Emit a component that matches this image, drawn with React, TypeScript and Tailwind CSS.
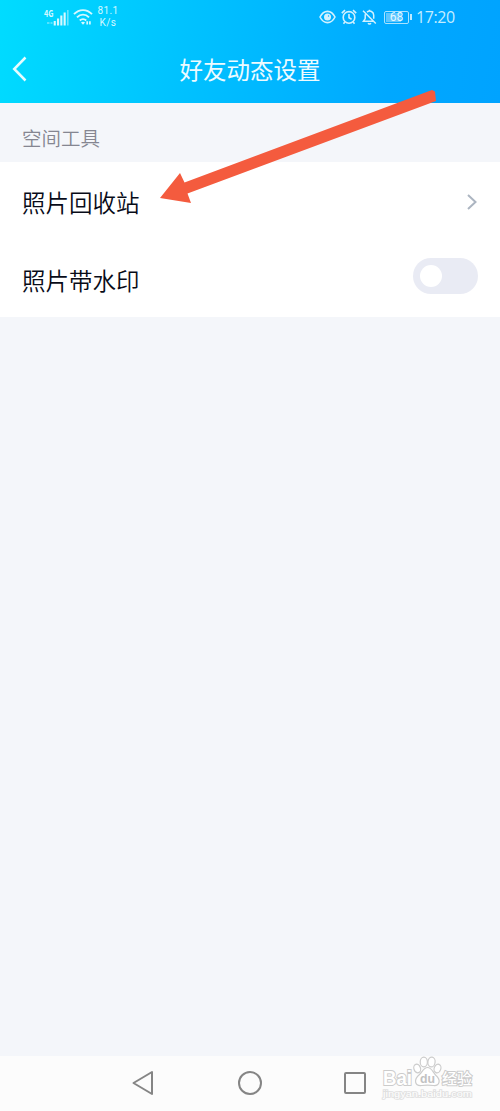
import { useState } from "react";
import * as Switch from "@radix-ui/react-switch";

function SignalIcon() {
  return (
    <svg width="26" height="20" viewBox="0 0 26 20" fill="none" className="shrink-0">
      <text x="0" y="9.5" fontSize="9" fontWeight="700" fill="#d5f8ff" textLength="9.5" lengthAdjust="spacingAndGlyphs">4G</text>
      <g fill="#d5f8ff">
        <rect x="3" y="15" width="2.5" height="2" opacity=".4" />
        <rect x="6.5" y="15" width="2" height="2" opacity=".4" />
        <rect x="9.7" y="14" width="2.1" height="4.5" />
        <rect x="13" y="11.5" width="2.1" height="7" />
        <rect x="16.3" y="8.5" width="2.1" height="10" />
        <rect x="19.6" y="5.5" width="2.1" height="13" />
        <rect x="23" y="3" width="1.6" height="15.5" opacity=".5" />
      </g>
    </svg>
  );
}

function WifiIcon() {
  return (
    <svg width="20" height="18" viewBox="0 0 20 18" fill="none" stroke="#d5f8ff" strokeWidth="1.9" className="shrink-0">
      <path d="M1 6.2C6.2.7 13.8.7 19 6.2M4 9.4c3.5-3.7 8.5-3.7 12 0M6.8 12.5c1.8-1.9 4.6-1.9 6.4 0" />
      <path d="m10 16.8-2-2.3c1.1-1 2.9-1 4 0z" fill="#d5f8ff" stroke="none" />
      <path d="M14.2 13.2v3.3M16.9 13.2v3.3" strokeWidth="1.7" />
    </svg>
  );
}

function EyeIcon() {
  return (
    <svg width="17" height="14" viewBox="0 0 17 14" fill="none" stroke="#d2f1ff" className="shrink-0">
      <path d="M1 7c3.8-7.5 11.2-7.5 15 0-3.8 7.5-11.2 7.5-15 0z" strokeWidth="1.6" />
      <circle cx="8.5" cy="7" r="3.5" fill="#d2f1ff" stroke="none" />
      <circle cx="9.5" cy="6" r=".7" fill="#08a9ff" stroke="none" />
    </svg>
  );
}

function AlarmIcon() {
  return (
    <svg width="16" height="16" viewBox="0 0 16 16" fill="none" stroke="#d2f1ff" strokeWidth="1.6" className="shrink-0">
      <circle cx="8" cy="8.4" r="5.8" />
      <path d="M8 5v3.8l2.6 1.5M.8 4.2 4 1.2M15.2 4.2 12 1.2M3.8 13l-1.3 1.7M12.2 13l1.3 1.7" />
    </svg>
  );
}

function BellOffIcon() {
  return (
    <svg width="15" height="16" viewBox="0 0 15 16" fill="none" stroke="#d2f1ff" strokeWidth="1.5" className="shrink-0">
      <path d="M5 3.2c3-2.5 6.7-.3 6.7 3v3.5M3.2 5.2v4.4L1.4 12.3h9.8M6 14.2c.8 1 2.2 1 3 0M7.5 2V.7M1 1.8l12.8 12.7" />
    </svg>
  );
}

function StatusBar() {
  return (
    <div className="flex h-[34px] items-center pl-[44px] text-[#d5f8ff]">
      <SignalIcon />
      <div className="ml-[3px]"><WifiIcon /></div>
      <div className="mb-px ml-1 flex w-[22px] flex-col items-center font-['Roboto',sans-serif] text-[10px] leading-[12px] tracking-[.4px]">
        <span>81.1</span>
        <span>K/s</span>
      </div>
      <div className="ml-[200px] flex items-center">
        <EyeIcon />
        <div className="ml-[5px]"><AlarmIcon /></div>
        <div className="ml-[5px]"><BellOffIcon /></div>
        <div className="ml-[7px] flex items-center">
          <div className="flex h-[13px] w-[25px] rounded-[2px] border border-[#a9e2ff] p-px">
            <div className="flex w-full items-center justify-center bg-linear-to-r from-[#5fc6ff] from-70% to-transparent to-70% font-['Roboto',sans-serif] text-[12px] leading-none text-[#e6f8ff]">
              68
            </div>
          </div>
          <div className="ml-px h-[6px] w-[2px] bg-[#bce9ff]" />
        </div>
        <span className="ml-1 font-['Open_Sans',sans-serif] text-[16px] leading-none tracking-[-.4px] text-[#c5edff]">17:20</span>
      </div>
    </div>
  );
}

function Header() {
  return (
    <header className="h-[103px] bg-[linear-gradient(100deg,#00dcff_0%,#00c3ff_36%,#00a8ff_78%,#00a3ff_100%)]">
      <StatusBar />
      <div className="grid h-[69px] grid-cols-[60px_1fr_60px] items-center">
        <button aria-label="返回" className="pl-3">
          <svg width="16" height="28" viewBox="0 0 16 28" fill="none" stroke="#e6fcff" strokeWidth="2.5">
            <path d="M13.5 2.5 2.2 14l11.3 11.5" />
          </svg>
        </button>
        <h1 className="text-center text-[23.5px] leading-[34px] text-[#edfbff]">好友动态设置</h1>
      </div>
    </header>
  );
}

function NavBar() {
  return (
    <nav className="flex h-[55px] items-center bg-[#fcfcfc] pb-[2px] pl-[131px] text-[#858585]">
      <svg width="24" height="28" viewBox="0 0 24 28" fill="none" stroke="currentColor" strokeWidth="2" strokeLinejoin="round">
        <path d="M21 3v22L2.5 14z" />
      </svg>
      <svg width="26" height="26" viewBox="0 0 26 26" fill="none" stroke="currentColor" strokeWidth="2" className="ml-[82px]">
        <circle cx="13" cy="13" r="11" />
      </svg>
      <svg width="24" height="24" viewBox="0 0 24 24" fill="none" stroke="currentColor" strokeWidth="2" className="ml-[80px]">
        <rect x="2" y="2" width="20" height="20" rx="1" />
      </svg>
    </nav>
  );
}

function Watermark() {
  return (
    <svg
      width="100"
      height="48"
      viewBox="0 0 100 48"
      className="pointer-events-none absolute right-[20px] bottom-[9px]"
      fill="#fff"
      stroke="#cccccc"
      strokeWidth="1.2"
    >
      <g fontFamily="Liberation Sans, Noto Sans CJK SC, sans-serif">
        <text x="3" y="30.5" fontSize="20" fontWeight="700" textLength="29" lengthAdjust="spacingAndGlyphs" strokeWidth="2" paintOrder="stroke">Bai</text>
        <ellipse cx="37.2" cy="14.5" rx="3.3" ry="4.4" transform="rotate(-18 37.2 14.5)" />
        <ellipse cx="43.8" cy="8" rx="3.6" ry="4.9" />
        <ellipse cx="51.5" cy="8" rx="3.6" ry="4.9" transform="rotate(8 51.5 8)" />
        <ellipse cx="57.5" cy="14.5" rx="3.3" ry="4.4" transform="rotate(20 57.5 14.5)" />
        <path d="M47.5 13.500c4 0 5 4 8 7.500 6 5 4 11-2 10.500-4-.6-8-.6-12 0-7 .5-8-6-2-11 3-2.500 4-7 8-7z" />
        <text x="40" y="29" fontSize="13" fontWeight="700" textLength="15" lengthAdjust="spacingAndGlyphs" fill="#c2c2c2" stroke="none">du</text>
        <text x="62" y="29.5" fontSize="15" fontWeight="500" textLength="30" lengthAdjust="spacingAndGlyphs" strokeWidth="2" paintOrder="stroke">经验</text>
        <text x="3" y="43" fontSize="9" textLength="89" lengthAdjust="spacingAndGlyphs" stroke="#e0e0e0" strokeWidth="1.6" paintOrder="stroke">jingyan.baidu.com</text>
      </g>
    </svg>
  );
}

export default function App() {
  const [watermark, setWatermark] = useState(false);

  return (
    <div className="relative flex h-[1111px] w-[500px] flex-col overflow-hidden bg-[#f4f6fa] font-['Noto_Sans_CJK_SC',sans-serif]">
      <Header />

      <main className="flex-1">
        <h2 className="flex h-[59px] items-center pt-[10px] pl-[22px] text-[19.5px] font-[350] text-[#858691]">空间工具</h2>
        <div className="bg-white text-[23.5px] font-[350] text-[#080b18]">
          <button className="flex h-[79px] w-full items-center justify-between px-[22px]">
            <span className="pt-[3px]">照片回收站</span>
            <svg width="12" height="18" viewBox="0 0 12 18" fill="none" stroke="#acb5c1" strokeWidth="2">
              <path d="m2 2 7.5 7L2 16" />
            </svg>
          </button>
          <div className="flex h-[76px] items-center justify-between px-[22px]">
            <span className="pt-[3px]">照片带水印</span>
            <Switch.Root
              checked={watermark}
              onCheckedChange={setWatermark}
              className="mb-[7px] flex h-9 w-[65px] items-center rounded-full bg-[#e9ebf4] px-[7px] data-[state=checked]:bg-[#00b7ff]"
            >
              <Switch.Thumb className="size-[22px] rounded-full bg-white transition-transform data-[state=checked]:translate-x-[29px]" />
            </Switch.Root>
          </div>
        </div>
      </main>

      <NavBar />
      <Watermark />

      {/* pointer to the recycle bin row */}
      <svg width="290" height="125" viewBox="150 85 290 125" className="pointer-events-none absolute top-[85px] left-[150px]" fill="#f45b3e">
        <path d="m160 198 20-25 4.500 9.500L432 90l3 1.500 1 9.500-248.500 92.500 3.500 9.500z" />
      </svg>
    </div>
  );
}
